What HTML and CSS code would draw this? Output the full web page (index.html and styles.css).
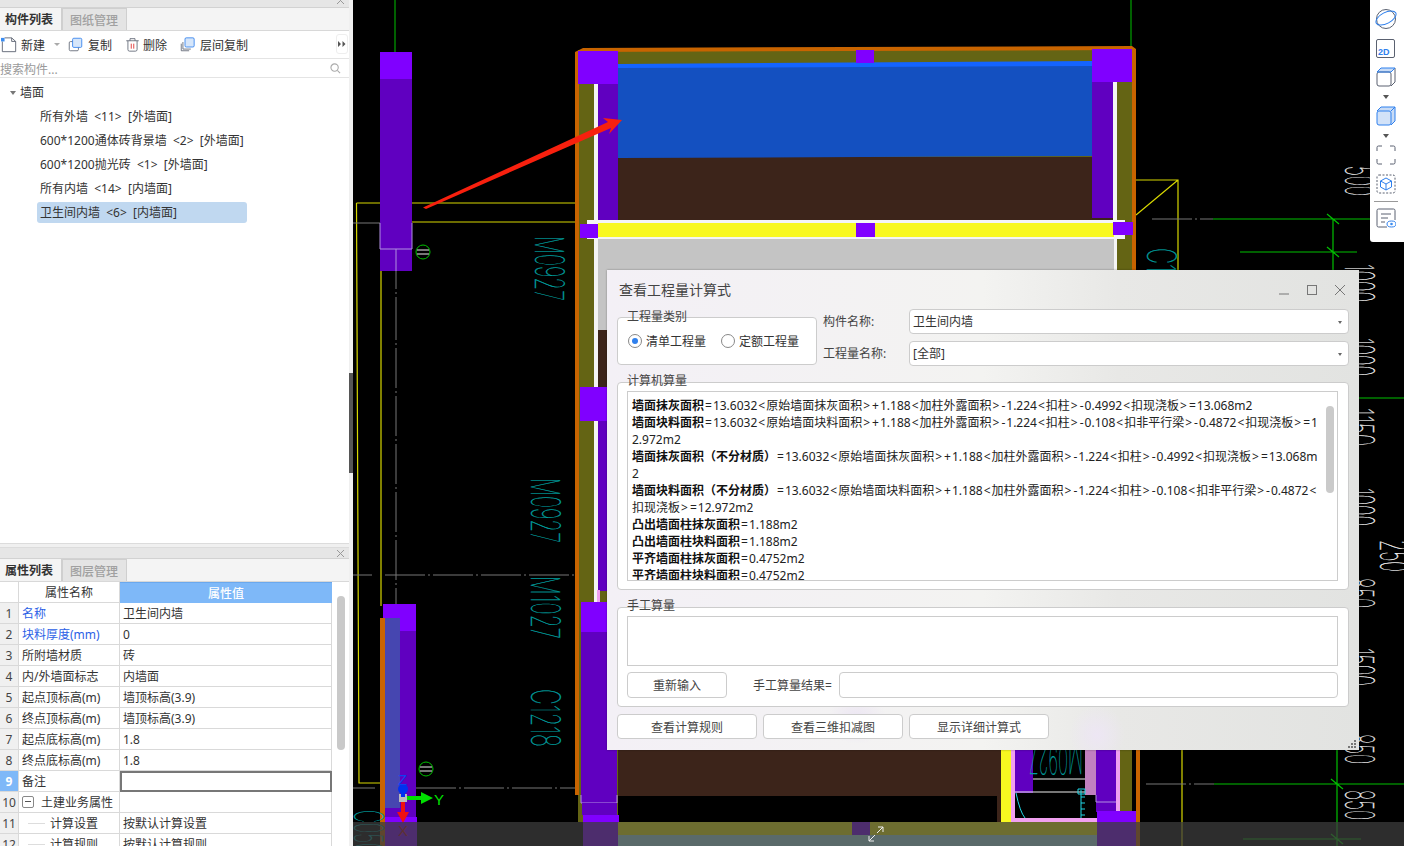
FILE: index.html
```html
<!DOCTYPE html>
<html lang="zh">
<head>
<meta charset="utf-8">
<title>查看工程量计算式</title>
<link rel="stylesheet" href="styles.css">
</head>
<body>
<div class="app">
  <aside class="side">
    <section class="panel-top">
      <div class="strip"><svg class="x" viewBox="0 0 9 9"><path d="M1 1L8 8M8 1L1 8"/></svg></div>
      <div class="tabs">
        <div class="tab on">构件列表</div>
        <div class="tab">图纸管理</div>
      </div>
      <div class="tools">
        <span class="tool t-new">
          <svg class="ic" viewBox="0 0 18 18"><path class="s-g" d="M1.500 5V16.500H16.500V5L12 1H4"/><path class="s-g" d="M12 1V5H16.500"/><rect class="f-b" x="0" y="1" width="4" height="4"/></svg>
          新建<i class="drop"></i>
        </span>
        <span class="tool t-copy">
          <svg class="ic" viewBox="0 0 18 18"><rect class="s-g" x="1.500" y="5.500" width="11" height="11" rx="1.500"/><rect class="s-b" x="5.500" y="1.500" width="11" height="11" rx="1.500"/></svg>
          复制
        </span>
        <span class="tool t-del">
          <svg class="ic" viewBox="0 0 18 18"><path class="s-g" d="M3.500 4.500V15a2 2 0 0 0 2 2h7a2 2 0 0 0 2-2V4.500M1.500 4.500H16.500M6 4.500V2H12V4.500"/><path class="s-r" d="M7.500 8V14M10.500 8V14"/></svg>
          删除
        </span>
        <span class="tool t-floor">
          <svg class="ic" viewBox="0 0 18 18"><path class="s-g" d="M1.500 8V16.500H11M3.500 6V14.500H13"/><rect class="s-b" x="6" y="1" width="11" height="11" rx="1.500"/></svg>
          层间复制
        </span>
        <span class="more"><svg viewBox="0 0 8 6"><path d="M0 0L3 3L0 6ZM4.500 0L7.500 3L4.500 6Z"/></svg></span>
      </div>
      <div class="search">
        <span>搜索构件...</span>
        <svg class="mag" viewBox="0 0 12 12"><circle cx="5" cy="5" r="4"/><path d="M8 8L11 11"/></svg>
      </div>
      <div class="tree">
        <div class="root"><i class="caret"></i>墙面</div>
        <div class="leaf">所有外墙 &nbsp;&lt;11&gt; &nbsp;[外墙面]</div>
        <div class="leaf">600*1200通体砖背景墙 &nbsp;&lt;2&gt; &nbsp;[外墙面]</div>
        <div class="leaf">600*1200抛光砖 &nbsp;&lt;1&gt; &nbsp;[外墙面]</div>
        <div class="leaf">所有内墙 &nbsp;&lt;14&gt; &nbsp;[内墙面]</div>
        <div class="leaf sel">卫生间内墙 &nbsp;&lt;6&gt; &nbsp;[内墙面]</div>
      </div>
    </section>
    <section class="panel-bot">
      <div class="strip"><svg class="x" viewBox="0 0 9 9"><path d="M1 1L8 8M8 1L1 8"/></svg></div>
      <div class="tabs">
        <div class="tab on">属性列表</div>
        <div class="tab">图层管理</div>
      </div>
      <div class="props">
        <div class="grid">
          <div class="row head"><div class="n"></div><div class="k">属性名称</div><div class="v">属性值</div></div>
          <div class="row"><div class="n">1</div><div class="k blue">名称</div><div class="v">卫生间内墙</div></div>
          <div class="row"><div class="n">2</div><div class="k blue">块料厚度(mm)</div><div class="v">0</div></div>
          <div class="row"><div class="n">3</div><div class="k">所附墙材质</div><div class="v">砖</div></div>
          <div class="row"><div class="n">4</div><div class="k">内/外墙面标志</div><div class="v">内墙面</div></div>
          <div class="row"><div class="n">5</div><div class="k">起点顶标高(m)</div><div class="v">墙顶标高(3.9)</div></div>
          <div class="row"><div class="n">6</div><div class="k">终点顶标高(m)</div><div class="v">墙顶标高(3.9)</div></div>
          <div class="row"><div class="n">7</div><div class="k">起点底标高(m)</div><div class="v">1.8</div></div>
          <div class="row"><div class="n">8</div><div class="k">终点底标高(m)</div><div class="v">1.8</div></div>
          <div class="row cur"><div class="n">9</div><div class="k">备注</div><div class="v"></div></div>
          <div class="row"><div class="n">10</div><div class="k group"><i class="minus"></i>土建业务属性</div><div class="v"></div></div>
          <div class="row"><div class="n">11</div><div class="k child">计算设置</div><div class="v">按默认计算设置</div></div>
          <div class="row"><div class="n">12</div><div class="k child">计算规则</div><div class="v">按默认计算规则</div></div>
        </div>
        <div class="vbar"><div class="thumb"></div></div>
      </div>
    </section>
  </aside>

  <main class="canvas">
    <svg class="cad" viewBox="349 0 1055 846">
      <rect class="bk" x="349" y="0" width="1055" height="846"/>

      <!-- grid lines -->
      <path class="gd" d="M395 0V52M1131 0V48"/>
      <path class="yl" d="M356.500 203H576M356.500 203L359 783H381M412 222H576M381 222V606M1136 180H1178V270M1136 215L1178 180M1182 750V846"/>
      <path class="gy" d="M353 223H380M396 249V300M396 300V622M353 575H372M385 575H575M353 788H375M416 788H575M1152 219H1213M1146 784H1214"/>
      <path class="gr" d="M1213 219H1370M1333 219V270M1240 252H1357M1327 214L1339 224M1327 247L1339 257M1214 784H1404M1337 750V846M1243 839H1361M1331 779L1343 789M1331 834L1343 844M1359 398H1404"/>

      <!-- left column upper -->
      <rect class="pu" x="380" y="52" width="32" height="27"/>
      <rect class="pd" x="380" y="79" width="32" height="192"/>
      <path class="lila" d="M380 223V249H412V223M396 249V271"/>
      <g class="mk"><circle cx="423" cy="252" r="7"/><path class="w" d="M417 250H429M417 254H429"/></g>

      <!-- left column lower -->
      <rect class="pu" x="383" y="604" width="33" height="27"/>
      <rect class="pd" x="383" y="631" width="33" height="190"/>
      <rect class="bl2" x="384" y="618" width="16" height="190"/>
      <rect class="or" x="380" y="618" width="5" height="228"/>
      <rect class="pu" x="385" y="817" width="32" height="29"/>
      <g class="mk"><circle cx="426" cy="769" r="7"/><path class="w" d="M420 767H432M420 771H432"/></g>

      <!-- building -->
      <rect class="ol" x="578" y="50" width="554" height="772"/>
      <path class="or" d="M575 52L583 48L1132 46L1136 49V270H1132V50L579 52V795H575Z"/>
      <rect class="or" x="1133" y="270" width="4" height="30"/>
      <rect class="or" x="1136" y="300" width="4" height="546"/>
      <rect class="bn" x="597" y="157" width="518" height="65"/>
      <path class="bl" d="M618 66L1092 63V156L618 158Z"/>
      <path class="bl3" d="M618 64L1092 61V66L618 68Z"/>
      <rect class="bk" x="618" y="796" width="395" height="27"/>
      <rect class="bn" x="618" y="700" width="383" height="96"/>
      <rect class="bn" x="997" y="790" width="4" height="32"/>

      <rect class="wh" x="594" y="84" width="4" height="620"/>
      <rect class="wh" x="1113" y="82" width="4" height="190"/>
      <rect class="pd" x="598" y="84" width="20" height="136"/>
      <rect class="pd" x="1092" y="82" width="21" height="136"/>
      <rect class="pu" x="578" y="51" width="40" height="33"/>
      <rect class="pu" x="1092" y="49" width="40" height="33"/>
      <rect class="pu" x="856" y="50" width="18" height="13"/>

      <rect class="wh" x="587" y="220" width="538" height="19"/>
      <rect class="ye" x="598" y="223" width="516" height="14"/>
      <rect class="pu" x="580" y="224" width="18" height="14"/>
      <rect class="pu" x="856" y="223" width="19" height="14"/>
      <rect class="pu" x="1113" y="222" width="20" height="13"/>
      <rect class="gray" x="598" y="239" width="516" height="100"/>

      <rect class="bn" x="598" y="330" width="12" height="58"/>
      <rect class="pu" x="580" y="387" width="30" height="34"/>
      <rect class="pd" x="598" y="421" width="12" height="170"/>
      <rect class="pk" x="597" y="590" width="3" height="12"/>
      <rect class="pu" x="581" y="602" width="36" height="30"/>
      <rect class="pd" x="581" y="632" width="36" height="171"/>
      <path class="lila" d="M581 795V803H617V795"/>
      <rect class="pd" x="582" y="803" width="35" height="12"/>
      <rect class="pu" x="583" y="815" width="36" height="31"/>

      <!-- lower-right fixtures -->
      <rect class="ye" x="1001" y="750" width="10" height="72"/>
      <rect class="pk" x="1011" y="750" width="4" height="72"/>
      <rect class="bk" x="1015" y="750" width="101" height="68"/>
      <rect class="pd" x="1015" y="750" width="18" height="43"/>
      <rect class="mv" x="1085" y="750" width="11" height="45"/>
      <rect class="pk" x="1116" y="750" width="4" height="61"/>
      <rect class="pd" x="1096" y="750" width="20" height="62"/>
      <path class="lila" d="M1096 795V802H1116"/>
      <rect class="pk" x="1011" y="818" width="86" height="4"/>
      <rect class="pu" x="1097" y="811" width="39" height="35"/>
      <path class="w" d="M1033 779H1085M1015 792H1085"/>
      <path class="cy" d="M1016 793Q1020 812 1025 818M1081 790V818M1078 789H1085V794H1078ZM1081 797H1085M1081 803H1085M1081 809H1085M1081 815H1085"/>

      <rect class="gf" x="618" y="822" width="479" height="13"/>
      <rect class="gf2" x="618" y="835" width="479" height="11"/>
      <rect class="pu" x="852" y="822" width="18" height="13"/>

      <!-- arrow -->
      <polygon class="rd" points="423,207.500 608,122 603,118 622,120 609,134 611,128 426,209"/>

      <!-- labels -->
      <g class="lb cy-t">
        <text transform="translate(535 236) rotate(90)" textLength="65" lengthAdjust="spacingAndGlyphs">M0927</text>
        <text transform="translate(531 478) rotate(90)" textLength="65" lengthAdjust="spacingAndGlyphs">M0927</text>
        <text transform="translate(531 576) rotate(90)" textLength="63" lengthAdjust="spacingAndGlyphs">M1027</text>
        <text transform="translate(531 689) rotate(90)" textLength="58" lengthAdjust="spacingAndGlyphs">C1218</text>
        <text transform="translate(1147 248) rotate(90)" textLength="24" lengthAdjust="spacingAndGlyphs">C1</text>
        <text transform="translate(354 810) rotate(90)" textLength="50" lengthAdjust="spacingAndGlyphs">C0501</text>
        <text transform="translate(1083 745) rotate(180)" textLength="54" lengthAdjust="spacingAndGlyphs">M0927</text>
      </g>
      <g class="lb wh-t">
        <text transform="translate(1345 166) rotate(90)" textLength="30" lengthAdjust="spacingAndGlyphs">500</text>
        <text transform="translate(1345 264) rotate(90)" textLength="38" lengthAdjust="spacingAndGlyphs">1000</text>
        <text transform="translate(1345 338) rotate(90)" textLength="38" lengthAdjust="spacingAndGlyphs">1000</text>
        <text transform="translate(1345 408) rotate(90)" textLength="38" lengthAdjust="spacingAndGlyphs">1150</text>
        <text transform="translate(1345 488) rotate(90)" textLength="38" lengthAdjust="spacingAndGlyphs">1000</text>
        <text transform="translate(1380 540) rotate(90)" textLength="32" lengthAdjust="spacingAndGlyphs">250</text>
        <text transform="translate(1345 578) rotate(90)" textLength="30" lengthAdjust="spacingAndGlyphs">850</text>
        <text transform="translate(1345 648) rotate(90)" textLength="38" lengthAdjust="spacingAndGlyphs">1500</text>
        <text transform="translate(1345 734) rotate(90)" textLength="30" lengthAdjust="spacingAndGlyphs">850</text>
        <text transform="translate(1345 790) rotate(90)" textLength="30" lengthAdjust="spacingAndGlyphs">850</text>
      </g>

      <!-- axis gizmo -->
      <rect class="gray2" x="399" y="794" width="8" height="8"/>
      <g class="ax-g"><path d="M407 796H421V792L433 798L421 804V800H407Z"/></g>
      <g class="ax-b"><circle cx="403" cy="789" r="5"/><rect x="401" y="792" width="4" height="5"/></g>
      <g class="ax-r"><path d="M401 802H405V812H409L403 823L397 812H401Z"/></g>
      <text class="ax-t tz" x="398" y="785">Z</text>
      <text class="ax-t ty" x="434" y="805">Y</text>
      <text class="ax-t tx" x="398" y="836">X</text>

      <!-- bottom strip -->
      <rect class="strip-b" x="353" y="822" width="1051" height="24"/>
      <path class="w" d="M869 841L875 835M869 836V841H874M883 827L877 833M883 832V827H878"/>
    </svg>

    <div class="split"></div>

    <nav class="rail">
      <svg class="r1" viewBox="0 0 22 22"><circle class="s-g" cx="11" cy="11" r="9.500"/><ellipse class="s-b" cx="11" cy="10" rx="11" ry="5.500" transform="rotate(-28 11 10)"/></svg>
      <div class="r2d"><span>2D</span></div>
      <svg class="r3" viewBox="0 0 20 20"><path class="f-l" d="M1 5L5 1H19L15 5Z"/><rect class="s-g" x="1" y="5" width="14" height="14" rx="2"/><path class="s-g" d="M15 19L19 15V1"/><path class="s-b" d="M1 5L5 1H19L15 5Z"/></svg>
      <i class="rdrop"></i>
      <svg class="r3" viewBox="0 0 20 20"><rect class="f-l2" x="1" y="5" width="14" height="14" rx="2"/><path class="f-l" d="M1 5L5 1H19V15L15 19V5Z"/><rect class="s-b" x="1" y="5" width="14" height="14" rx="2"/><path class="s-b" d="M1 5L5 1H19V15L15 19M15 5L19 1"/></svg>
      <i class="rdrop"></i>
      <svg class="r3" viewBox="0 0 20 20"><path class="s-g" d="M1 6V2.500A1.500 1.500 0 0 1 2.500 1H6M14 1H17.500A1.500 1.500 0 0 1 19 2.500V6M19 14V17.500A1.500 1.500 0 0 1 17.500 19H14M6 19H2.500A1.500 1.500 0 0 1 1 17.500V14"/></svg>
      <svg class="r3" viewBox="0 0 20 20"><rect class="s-d" x="1" y="1" width="18" height="18" rx="2"/><path class="s-b" d="M10 4L15.500 7V13L10 16L4.500 13V7ZM4.500 7L10 10L15.500 7M10 10V16"/></svg>
      <hr class="rsep">
      <svg class="r3" viewBox="0 0 20 20"><path class="s-g" d="M11 19H2.500A1.500 1.500 0 0 1 1 17.500V2.500A1.500 1.500 0 0 1 2.500 1H17.500A1.500 1.500 0 0 1 19 2.500V12"/><path class="s-g" d="M5 6H15M5 10H12M5 14H9"/><ellipse class="s-b" cx="15.500" cy="16" rx="4.500" ry="3"/><circle class="f-b" cx="15.500" cy="16" r="1.300"/></svg>
    </nav>

    <div class="dlg">
      <header class="dlg-h">
        <h1>查看工程量计算式</h1>
        <div class="win">
          <svg viewBox="0 0 12 12"><path d="M1 10H11"/></svg>
          <svg viewBox="0 0 12 12"><rect x="1.500" y="1.500" width="9" height="9"/></svg>
          <svg viewBox="0 0 12 12"><path d="M1 1L11 11M11 1L1 11"/></svg>
        </div>
      </header>
      <div class="dlg-top">
        <div class="grp g-type">
          <span class="legend">工程量类别</span>
          <label class="radio"><i class="dot on"></i>清单工程量</label>
          <label class="radio"><i class="dot"></i>定额工程量</label>
        </div>
        <div class="fields">
          <label>构件名称:</label><div class="sel-box">卫生间内墙<i class="drop2"></i></div>
          <label>工程量名称:</label><div class="sel-box">[全部]<i class="drop2"></i></div>
        </div>
      </div>
      <div class="grp g-calc">
        <span class="legend">计算机算量</span>
        <div class="calc">
          <div class="lines">
            <p><b>墙面抹灰面积</b><i>=</i>13.6032<i>&lt;</i>原始墙面抹灰面积<i>&gt;</i><i>+</i>1.188<i>&lt;</i>加柱外露面积<i>&gt;</i><i>-</i>1.224<i>&lt;</i>扣柱<i>&gt;</i><i>-</i>0.4992<i>&lt;</i>扣现浇板<i>&gt;</i><i>=</i>13.068m2</p>
            <p><b>墙面块料面积</b><i>=</i>13.6032<i>&lt;</i>原始墙面块料面积<i>&gt;</i><i>+</i>1.188<i>&lt;</i>加柱外露面积<i>&gt;</i><i>-</i>1.224<i>&lt;</i>扣柱<i>&gt;</i><i>-</i>0.108<i>&lt;</i>扣非平行梁<i>&gt;</i><i>-</i>0.4872<i>&lt;</i>扣现浇板<i>&gt;</i><i>=</i>1</p>
            <p>2.972m2</p>
            <p><b>墙面抹灰面积（不分材质）</b><i>=</i>13.6032<i>&lt;</i>原始墙面抹灰面积<i>&gt;</i><i>+</i>1.188<i>&lt;</i>加柱外露面积<i>&gt;</i><i>-</i>1.224<i>&lt;</i>扣柱<i>&gt;</i><i>-</i>0.4992<i>&lt;</i>扣现浇板<i>&gt;</i><i>=</i>13.068m</p>
            <p>2</p>
            <p><b>墙面块料面积（不分材质）</b><i>=</i>13.6032<i>&lt;</i>原始墙面块料面积<i>&gt;</i><i>+</i>1.188<i>&lt;</i>加柱外露面积<i>&gt;</i><i>-</i>1.224<i>&lt;</i>扣柱<i>&gt;</i><i>-</i>0.108<i>&lt;</i>扣非平行梁<i>&gt;</i><i>-</i>0.4872<i>&lt;</i></p>
            <p>扣现浇板<i>&gt;</i><i>=</i>12.972m2</p>
            <p><b>凸出墙面柱抹灰面积</b><i>=</i>1.188m2</p>
            <p><b>凸出墙面柱块料面积</b><i>=</i>1.188m2</p>
            <p><b>平齐墙面柱抹灰面积</b><i>=</i>0.4752m2</p>
            <p><b>平齐墙面柱块料面积</b><i>=</i>0.4752m2</p>
          </div>
          <div class="calc-bar"><div class="calc-thumb"></div></div>
        </div>
      </div>
      <div class="grp g-hand">
        <span class="legend">手工算量</span>
        <div class="hand-in"></div>
        <div class="hand-row">
          <button class="btn b-re">重新输入</button>
          <span class="hand-l">手工算量结果=</span>
          <div class="hand-res"></div>
        </div>
      </div>
      <div class="dlg-btns">
        <button class="btn b-w">查看计算规则</button>
        <button class="btn b-w">查看三维扣减图</button>
        <button class="btn b-w">显示详细计算式</button>
      </div>
      <svg class="grip" viewBox="0 0 9 9"><path d="M6 0h2v2h-2zM3 3h2v2h-2zM6 3h2v2h-2zM0 6h2v2h-2zM3 6h2v2h-2zM6 6h2v2h-2z"/></svg>
    </div>
  </main>
</div>
</body>
</html>
```

FILE: styles.css
```css
* { box-sizing: border-box; }
html, body { margin: 0; height: 846px; overflow: hidden; }
body { font: 12px/17px "Noto Sans", "Noto Sans CJK SC", "Liberation Sans", sans-serif; color: #333; background: #fff; }
.app { display: flex; width: 1404px; height: 846px; }

/* side panels */
.side { width: 349px; height: 846px; display: flex; flex-direction: column; flex: none; background: #f0f0f0; }
.panel-top { height: 544px; background: #fff; border-bottom: 1px solid #dcdcdc; flex: none; }
.panel-bot { margin-top: 3px; height: 299px; background: #fff; flex: none; overflow: hidden; border-top: 1px solid #dcdcdc; }
.strip { height: 8px; background: #e6e6e6; border-bottom: 1px solid #d2d2d2; position: relative; overflow: hidden; }
.panel-bot .strip { height: 11px; }
.x { position: absolute; right: 4px; top: -4px; width: 9px; height: 9px; fill: none; stroke: #999; stroke-width: 1; }
.panel-bot .x { top: 1px; }
.tabs { height: 23px; display: flex; background: #f4f4f4; border-bottom: 1px solid #d8d8d8; }
.tab { width: 65px; padding-left: 7px; line-height: 23px; font-size: 12px; color: #a0a0a0; background: #e4e4e4; border: 1px solid #cfcfcf; border-bottom: 0; font-weight: 500; }
.tab.on { background: #f4f4f4; color: #333; border: 0; border-right: 1px solid #cfcfcf; padding-left: 5px; width: 62px; font-weight: 700; }
.tools { height: 28px; display: flex; align-items: center; position: relative; border-bottom: 1px solid #e4e4e4; padding-top: 2px; }
.tool { display: flex; align-items: center; position: relative; }
.t-new { margin-left: 1px; width: 67px; gap: 4px; }
.t-copy { width: 57px; gap: 5px; }
.t-del { width: 55px; gap: 3px; }
.t-floor { gap: 5px; }
.ic { width: 15px; height: 15px; flex: none; transform: translateY(-1px); }
.t-new .ic { width: 16px; height: 16px; }
.drop { display: inline-block; margin-left: 5px; border: 3px solid transparent; border-top: 3px solid #aaa; border-bottom: 0; transform: translateY(-1px); }
.more { position: absolute; left: 336px; top: 3px; width: 12px; height: 20px; border: 1px solid #eee; border-radius: 3px; display: flex; align-items: center; justify-content: center; }
.more svg { width: 8px; height: 6px; fill: #555; }
.s-g { fill: none; stroke: #5a6170; stroke-width: 1; }
.s-b { fill: none; stroke: #2f80ed; stroke-width: 1; }
.s-r { fill: none; stroke: #d22; stroke-width: 1; }
.s-d { fill: none; stroke: #5a6170; stroke-width: 1; stroke-dasharray: 2 1.500; }
.f-b { fill: #3b8cf0; }
.f-l { fill: #c9dcf6; }
.f-l2 { fill: #d2e2f8; }
.t-copy .s-b, .t-floor .s-b { fill: #d6e6fa; }
.search { height: 19px; display: flex; align-items: center; justify-content: space-between; padding: 2px 8px 0 0; color: #9a9a9a; border-bottom: 1px solid #e4e4e4; }
.mag { width: 11px; height: 11px; fill: none; stroke: #aaa; stroke-width: 1.200; transform: translateY(-1px); }
.tree { padding-top: 2px; }
.root { height: 24px; line-height: 26px; padding-left: 20px; position: relative; }
.caret { position: absolute; left: 10px; top: 11px; border: 3.500px solid transparent; border-top: 4px solid #777; border-bottom: 0; }
.leaf { height: 24px; line-height: 26px; padding-left: 40px; white-space: nowrap; }
.leaf.sel { margin-left: 37px; width: 210px; height: 21px; line-height: 22px; margin-top: 2px; padding-left: 3px; background: #c0d8f0; border-radius: 3px; }

/* property grid */
.props { display: flex; height: 264px; overflow: hidden; }
.grid { width: 332px; flex: none; }
.row { display: grid; grid-template-columns: 19px 101px 212px; height: 21px; line-height: 22px; }
.row > div { border-bottom: 1px solid #d9d9d9; border-right: 1px solid #d9d9d9; white-space: nowrap; overflow: hidden; }
.n { background: #f0f0f0; text-align: center; font-size: 12px; color: #444; }
.k { padding-left: 3px; }
.v { padding-left: 3px; }
.blue { color: #2c5fe6; }
.head { height: 21px; }
.head .n { background: #fff; }
.head .k { text-align: center; padding: 0; }
.row.head .v { background: #7eb8f8; color: #fff; text-align: center; font-weight: 500; padding: 0; border: 0; border-top: 1px solid #6aa8ee; }
.cur .n { background: #7eb8f8; color: #fff; font-weight: 700; }
.row.cur .v { border: 2px solid #777; }
.group { padding: 2px 0 0 3px; display: flex; align-items: center; gap: 7px; }
.minus { width: 12px; height: 12px; border: 1px solid #888; border-radius: 2px; position: relative; flex: none; transform: translateY(-1px); }
.minus::after { content: ""; position: absolute; left: 2px; top: 4px; width: 6px; height: 1px; background: #555; }
.child { padding-left: 31px; position: relative; }
.child::before { content: ""; position: absolute; left: 9px; top: 10px; width: 17px; height: 1px; background: #ddd; }
.vbar { width: 17px; padding: 14px 4px 0 5px; }
.thumb { height: 154px; border-radius: 4px; background: #c9c9c9; }

/* canvas */
.canvas { position: relative; flex: 1; height: 846px; overflow: hidden; }
.cad { display: block; width: 1055px; height: 846px; }
.bk { fill: #000; }
.pu { fill: #8000ff; }
.pd { fill: #6000c0; }
.ol { fill: #646414; }
.or { fill: #c86400; }
.bn { fill: #3c241a; }
.bl { fill: #1450c0; }
.bl2 { fill: #4646b0; }
.bl3 { fill: #1464ff; }
.wh { fill: #f4f4f4; }
.ye { fill: #f8f820; }
.pk { fill: #f0a0f0; }
.mv { fill: #c080c0; }
.gf { fill: #ffff0c; }
.gf2 { fill: #b4f4f4; }
.gray { fill: #c4c4c4; }
.gray2 { fill: #bbb; }
.rd { fill: #f8200e; }
.gd, .gr, .yl, .gy, .lila, .w, .cy { fill: none; }
.gd { stroke: #008000; stroke-width: 1.500; }
.gr { stroke: #00c000; stroke-width: 1.200; }
.yl { stroke: #d8d800; stroke-width: 1.200; }
.gy { stroke: #777; stroke-width: 1; stroke-dasharray: 40 3 2 3; }
.lila { stroke: #b090e0; stroke-width: 1; }
.w { stroke: #eee; stroke-width: 1; }
.cy { stroke: #20d8e8; stroke-width: 1; }
.mk circle { fill: none; stroke: #00c000; stroke-width: 1; }
.lb text { font: 100 40px Inter, "Liberation Sans", sans-serif; stroke-width: .35; }
.cy-t text { fill: #00a0a0; stroke: #00a0a0; }
.wh-t text { fill: #f0f0f0; stroke: #f0f0f0; }
.ax-g path { fill: #00e000; }
.ax-b circle, .ax-b rect { fill: #0030f0; }
.ax-r path { fill: #f01010; }
.ax-t { font: 400 15px "Liberation Sans", sans-serif; }
.tz { fill: #1040f0; }
.ty { fill: #00e000; }
.tx { fill: #c01010; }
.strip-b { fill: rgb(60, 60, 60); fill-opacity: .75; }
.split { position: absolute; left: 0; top: 373px; width: 4px; height: 100px; background: #565656; z-index: 2; }
.canvas::before { content: ""; position: absolute; left: 0; top: 0; width: 4px; height: 846px; background: #f0f0f0; z-index: 1; }

/* right rail */
.rail { position: absolute; left: 1021px; top: 0; width: 34px; height: 242px; background: #fff; border-radius: 0 0 0 3px; box-shadow: 0 0 2px rgba(0,0,0,.3); display: flex; flex-direction: column; align-items: center; padding: 8px 3px 0 0; }
.rail svg { flex: none; }
.r1 { width: 22px; height: 22px; }
.r2d { margin-top: 9px; width: 19px; height: 19px; border: 1px solid #5a6170; border-radius: 2px; position: relative; }
.r2d span { position: absolute; left: 1px; top: 7px; font: 700 9px/10px "Liberation Sans", sans-serif; color: #2f80ed; }
.r3 { width: 20px; height: 20px; }
.r2d + .r3 { margin-top: 9px; }
.rdrop { margin: 8px 0 7px; flex: none; border: 3.500px solid transparent; border-top: 4px solid #555; border-bottom: 0; }
.r3 + .r3 { margin-top: 9px; }
.rsep { width: 24px; height: 1px; margin: 7px 0 6px; border: 0; background: #999; flex: none; }

/* dialog */
.dlg { position: absolute; left: 258px; top: 270px; width: 752px; height: 480px; padding: 0 10px; background: radial-gradient(ellipse 30px 24px at 250px 450px, #ebe4f3, transparent), radial-gradient(ellipse 28px 30px at 490px 465px, #ede6f4, transparent), linear-gradient(90deg, #f3f0f6 0, #f3f3f1 50%, #e8e8e6 68%, #e2e3e1 100%); box-shadow: 0 0 2px rgba(0,0,0,.35); z-index: 2; color: #333; }
.dlg-h { height: 47px; display: flex; justify-content: space-between; padding: 11px 0 0 2px; }
.dlg-h h1 { margin: 0; font-size: 14px; font-weight: 400; line-height: 18px; color: #444; }
.win { display: flex; gap: 16px; padding: 3px 3px 0 0; margin-right: 0; }
.win svg { width: 12px; height: 12px; fill: none; stroke: #777; stroke-width: 1; }
.dlg-top { display: flex; height: 48px; }
.grp { position: relative; background: #fff; border: 1px solid #ccc; border-radius: 4px; }
.legend { position: absolute; left: 9px; top: -10px; line-height: 16px; color: #444; white-space: nowrap; }
.g-type .legend { top: -9px; }
.g-type { width: 200px; display: flex; align-items: center; padding: 0 0 0 10px; gap: 15px; }
.radio { display: flex; align-items: center; gap: 4px; white-space: nowrap; }
.dot { width: 14px; height: 14px; border: 1px solid #888; border-radius: 50%; background: #fff; position: relative; }
.dot.on::after { content: ""; position: absolute; left: 3px; top: 3px; width: 6px; height: 6px; border-radius: 50%; background: #2f80ed; }
.fields { display: grid; grid-template-columns: 86px 440px; grid-template-rows: 25px 25px; row-gap: 7px; margin: -8px 0 0 6px; }
.fields label { line-height: 26px; color: #444; }
.sel-box { position: relative; background: #fff; border: 1px solid #ccc; border-radius: 4px; padding-left: 3px; line-height: 24px; }
.drop2 { position: absolute; right: 6px; top: 11px; border: 2.500px solid transparent; border-top: 3px solid #666; border-bottom: 0; }
.g-calc { margin-top: 17px; height: 208px; padding: 8px 10px 0 9px; }
.calc { height: 190px; border: 1px solid #ccc; display: flex; overflow: hidden; }
.lines { flex: 1; padding: 5px 0 0 4px; color: #222; }
.lines p { margin: 0; white-space: nowrap; line-height: 17px; height: 17px; }
.lines b { font-weight: 700; color: #111; }
.lines i { font-style: normal; margin: 0 1px; }
.calc-bar { width: 8px; padding-top: 14px; flex: none; margin-right: 3px; }
.calc-thumb { width: 8px; height: 87px; border-radius: 4px; background: #cacaca; }
.g-hand { margin-top: 17px; height: 100px; padding: 8px 10px 0 9px; }
.hand-in { height: 50px; border: 1px solid #ccc; }
.hand-row { display: flex; align-items: center; margin-top: 6px; height: 26px; }
.btn { font: inherit; color: #444; background: #fff; border: 1px solid #ccc; border-radius: 4px; height: 26px; padding: 1px 0 0; }
.b-re { width: 100px; flex: none; }
.hand-l { margin-left: 26px; width: 86px; white-space: nowrap; color: #444; }
.hand-res { flex: 1; height: 26px; border: 1px solid #ccc; border-radius: 4px; background: #fff; }
.dlg-btns { display: flex; gap: 6px; margin-top: 7px; }
.b-w { width: 140px; height: 25px; }
.grip { position: absolute; right: 2px; bottom: 1px; width: 9px; height: 9px; fill: #777; }
```
